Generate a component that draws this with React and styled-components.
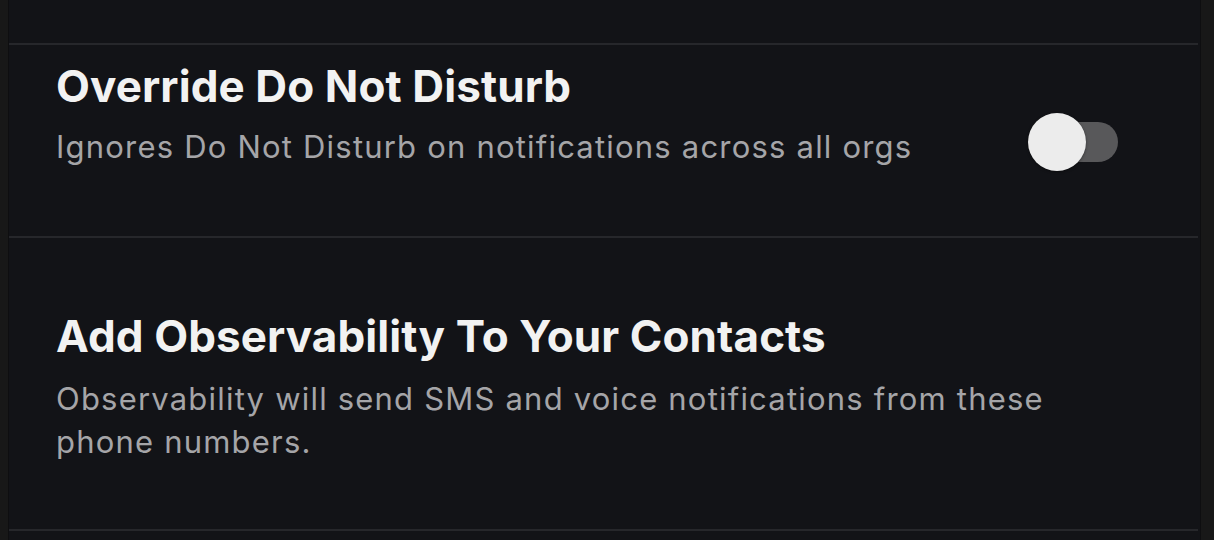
import React from "react";
import styled, { createGlobalStyle } from "styled-components";

const Global = createGlobalStyle`
  html, body { margin: 0; padding: 0; background: #161616; }
  body { font-family: Inter, "Noto Sans", sans-serif; -webkit-font-smoothing: antialiased; }
`;

const Page = styled.div`
  display: flex;
  width: 1214px;
  height: 540px;
  overflow: hidden;
  background: #171717;
`;

const Edge = styled.div`
  width: ${(p) => p.w}px;
  flex: none;
  box-sizing: border-box;
  background: #181818;
  border-${(p) => p.side}: 1px solid #0e0e10;
`;

const Panel = styled.div`
  flex: 1;
  display: flex;
  flex-direction: column;
  background: #121317;
`;

const Spacer = styled.div`
  height: ${(p) => p.h}px;
  flex: none;
`;

const Divider = styled.div`
  height: 2px;
  margin-right: 2px;
  background: #26272b;
  flex: none;
`;

const Row = styled.div`
  display: flex;
  align-items: flex-start;
  justify-content: space-between;
  height: ${(p) => p.h}px;
  padding: ${(p) => p.pad};
  box-sizing: border-box;
  flex: none;
`;

const Text = styled.div`
  display: flex;
  flex-direction: column;
`;

const Title = styled.div`
  color: #f2f2f2;
  font-size: 44px;
  font-weight: 700;
  line-height: 52px;
  letter-spacing: 0.1px;
`;

const Desc = styled.div`
  color: #a5a5a8;
  font-size: 31px;
  font-weight: 400;
  line-height: 43px;
  letter-spacing: 1.2px;
  margin-top: ${(p) => p.mt || 0}px;
  max-width: ${(p) => p.max || 1100}px;
`;

const Switch = styled.div`
  position: relative;
  flex: none;
  width: 80px;
  height: 40px;
  border-radius: 20px;
  background: #58585a;
  margin-right: 82px;
  margin-top: ${(p) => p.mt}px;
`;

const Knob = styled.div`
  position: absolute;
  left: -10px;
  top: -9px;
  width: 58px;
  height: 58px;
  border-radius: 50%;
  background: #ececec;
  box-shadow: 0 1px 3px rgba(0, 0, 0, 0.4);
`;

export default function App() {
  return (
    <>
      <Global />
      <Page>
        <Edge w={9} side="right" />
        <Panel>
          <Spacer h={43} />
          <Divider />
          <Row h={191} pad="15px 0 0 47px">
            <Text>
              <Title>Override Do Not Disturb</Title>
              <Desc mt={13}>Ignores Do Not Disturb on notifications across all orgs</Desc>
            </Text>
            <Switch mt={62}>
              <Knob />
            </Switch>
          </Row>
          <Divider />
          <Row h={291} pad="72px 0 0 47px">
            <Text>
              <Title>Add Observability To Your Contacts</Title>
              <Desc mt={15} max={1030}>
                Observability will send SMS and voice notifications from these phone numbers.
              </Desc>
            </Text>
          </Row>
          <Divider />
        </Panel>
        <Edge w={14} side="left" />
      </Page>
    </>
  );
}
